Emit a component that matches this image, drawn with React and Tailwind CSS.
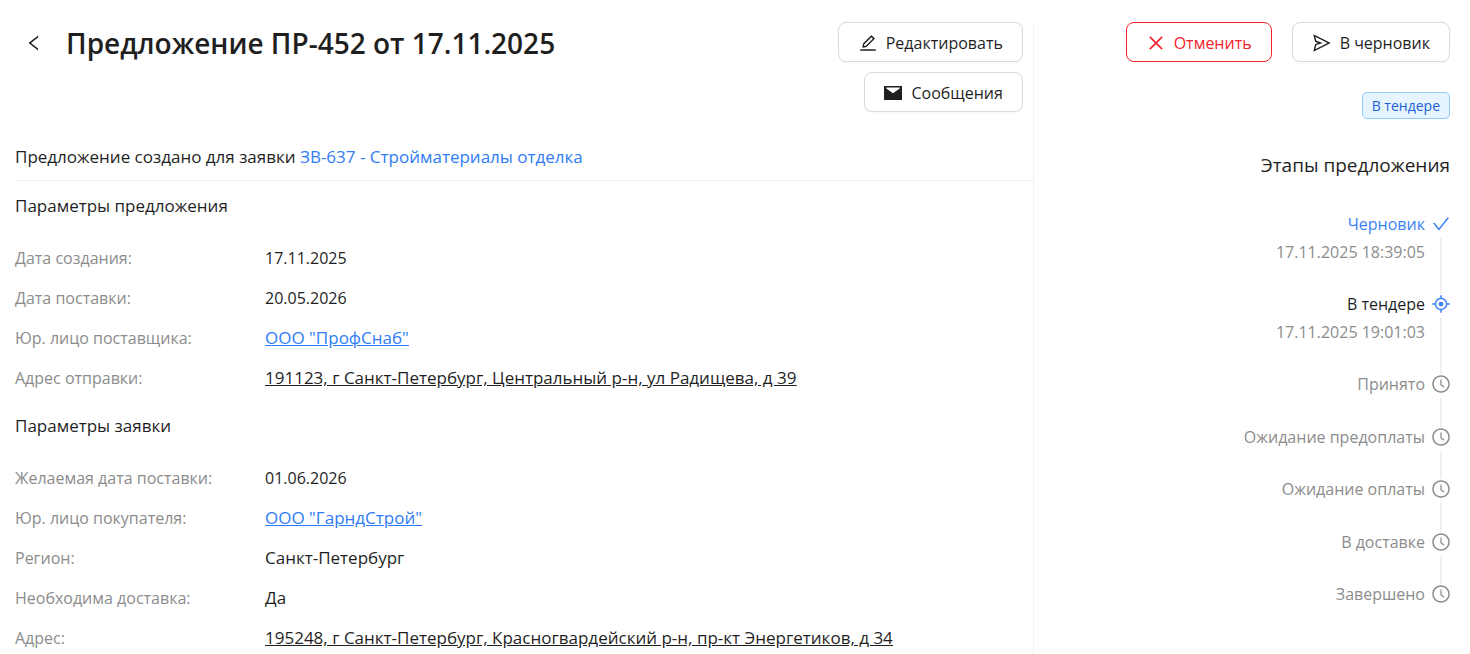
import {
  AiOutlineAim,
  AiOutlineCheck,
  AiOutlineClockCircle,
  AiOutlineClose,
  AiOutlineEdit,
  AiOutlineLeft,
  AiOutlineSend,
} from "react-icons/ai";

const offerParams = [
  { label: "Дата создания:", value: "17.11.2025", kind: "date" },
  { label: "Дата поставки:", value: "20.05.2026", kind: "date" },
  { label: "Юр. лицо поставщика:", value: 'ООО "ПрофСнаб"', kind: "company" },
  {
    label: "Адрес отправки:",
    value: "191123, г Санкт-Петербург, Центральный р-н, ул Радищева, д 39",
    kind: "address",
  },
];

const requestParams = [
  { label: "Желаемая дата поставки:", value: "01.06.2026", kind: "date" },
  { label: "Юр. лицо покупателя:", value: 'ООО "ГарндСтрой"', kind: "company" },
  { label: "Регион:", value: "Санкт-Петербург", kind: "text" },
  { label: "Необходима доставка:", value: "Да", kind: "text" },
  {
    label: "Адрес:",
    value: "195248, г Санкт-Петербург, Красногвардейский р-н, пр-кт Энергетиков, д 34",
    kind: "address",
  },
];

const stages = [
  { title: "Черновик", time: "17.11.2025 18:39:05", state: "done" },
  { title: "В тендере", time: "17.11.2025 19:01:03", state: "current" },
  { title: "Принято", state: "waiting" },
  { title: "Ожидание предоплаты", state: "waiting" },
  { title: "Ожидание оплаты", state: "waiting" },
  { title: "В доставке", state: "waiting" },
  { title: "Завершено", state: "waiting" },
];

const stageStyles = {
  done: { Icon: AiOutlineCheck, icon: "text-[#3b82f6]", title: "text-[#3b82f6]" },
  current: { Icon: AiOutlineAim, icon: "text-[#3b82f6]", title: "text-[#1f1f1f]" },
  waiting: { Icon: AiOutlineClockCircle, icon: "text-[#8c8c8c]", title: "text-[#8c8c8c]" },
};

const valueStyles = {
  date: "text-base",
  text: "text-[17px]",
  company: "text-[17px] text-[#2f7cf6] underline",
  address: "text-[17px] underline",
};

function MailIcon() {
  return (
    <svg viewBox="0 0 20 20" className="size-5" fill="currentColor" aria-hidden="true">
      <path
        fillRule="evenodd"
        d="M1.5 3H17.5Q18 3 18 3.5V16.5Q18 17 17.5 17H0.5Q0 17 0 16.5V3.5Q0 3 0.5 3ZM2.3 4.6V5.6L9 10.2L15.7 5.6V4.6Z"
      />
    </svg>
  );
}

function ActionButton({ icon, danger = false, children }) {
  return (
    <button
      type="button"
      className={
        "flex h-10 items-center gap-2 rounded-lg border bg-white px-[19px] pt-[2px] text-base whitespace-nowrap shadow-[0_2px_0_rgba(0,0,0,0.02)] " +
        (danger ? "border-[#f5222d] text-[#f5222d]" : "border-[#d9d9d9] text-[#1f1f1f]")
      }
    >
      {icon}
      {children}
    </button>
  );
}

function ParamSection({ title, rows }) {
  return (
    <section>
      <h2 className="py-3">{title}</h2>
      <dl className="pt-2">
        {rows.map(({ label, value, kind }) => (
          <div key={label} className="flex h-10 items-center">
            <dt className="w-[250px] shrink-0 text-base text-[#8c8c8c]">{label}</dt>
            <dd className={valueStyles[kind]}>
              {kind === "company" || kind === "address" ? <a href="#">{value}</a> : value}
            </dd>
          </div>
        ))}
      </dl>
    </section>
  );
}

function Stage({ title, time, state }) {
  const { Icon, icon, title: titleColor } = stageStyles[state];
  return (
    <li
      className={
        "group flex justify-end gap-[7px] " + (time ? "h-20" : "odd:h-[53px] even:h-[52px]")
      }
    >
      <div className="text-right">
        <p className={titleColor}>{title}</p>
        {time && <p className="pt-1 text-[#8c8c8c]">{time}</p>}
      </div>
      <div className="flex w-[18px] flex-col items-center gap-1 pt-[2px]">
        <Icon className={"size-5 shrink-0 " + icon} />
        <span className="mb-[-2px] w-[2px] flex-1 bg-[#f0f0f0] group-last:hidden" />
      </div>
    </li>
  );
}

export default function App() {
  return (
    <div className="grid min-h-screen grid-cols-[71fr_29fr] bg-white pr-5 pl-[15px] pt-[22px] font-['Open_Sans',sans-serif] text-[17px] leading-6 text-[#1f1f1f]">
      <main className="border-r border-[#f0f0f0]">
        <header className="flex items-start justify-between pr-[10px]">
          <div className="flex items-center pl-[11px]">
            <button type="button" aria-label="Назад" className="flex h-10 w-4 items-center justify-center">
              <AiOutlineLeft className="size-5 shrink-0" />
            </button>
            <h1 className="pl-6 text-[28px] leading-[42px] font-semibold">Предложение ПР-452 от 17.11.2025</h1>
          </div>
          <div className="flex flex-col items-end gap-[10px]">
            <ActionButton icon={<AiOutlineEdit className="size-5" />}>Редактировать</ActionButton>
            <ActionButton icon={<MailIcon />}>Сообщения</ActionButton>
          </div>
        </header>
        <p className="mt-[33px] border-b border-[#f0f0f0] pb-[11px]">
          Предложение создано для заявки{" "}
          <a href="#" className="text-[#2f7cf6]">
            ЗВ-637 - Стройматериалы отделка
          </a>
        </p>
        <div className="pt-[1px]">
          <ParamSection title="Параметры предложения" rows={offerParams} />
          <div className="pt-1">
            <ParamSection title="Параметры заявки" rows={requestParams} />
          </div>
        </div>
      </main>
      <aside>
        <div className="flex justify-end gap-5">
          <ActionButton danger icon={<AiOutlineClose className="size-5" />}>
            Отменить
          </ActionButton>
          <ActionButton icon={<AiOutlineSend className="size-5" />}>В черновик</ActionButton>
        </div>
        <div className="flex justify-end pt-[30px]">
          <span className="rounded-[5px] border border-[#91caff] bg-[#e6f4ff] px-[9px] text-sm leading-[25px] text-[#1d5fd6]">
            В тендере
          </span>
        </div>
        <h2 className="pt-8 text-right text-[19px] leading-7">Этапы предложения</h2>
        <ol className="pt-[33px] text-base">
          {stages.map((stage) => (
            <Stage key={stage.title} {...stage} />
          ))}
        </ol>
      </aside>
    </div>
  );
}
